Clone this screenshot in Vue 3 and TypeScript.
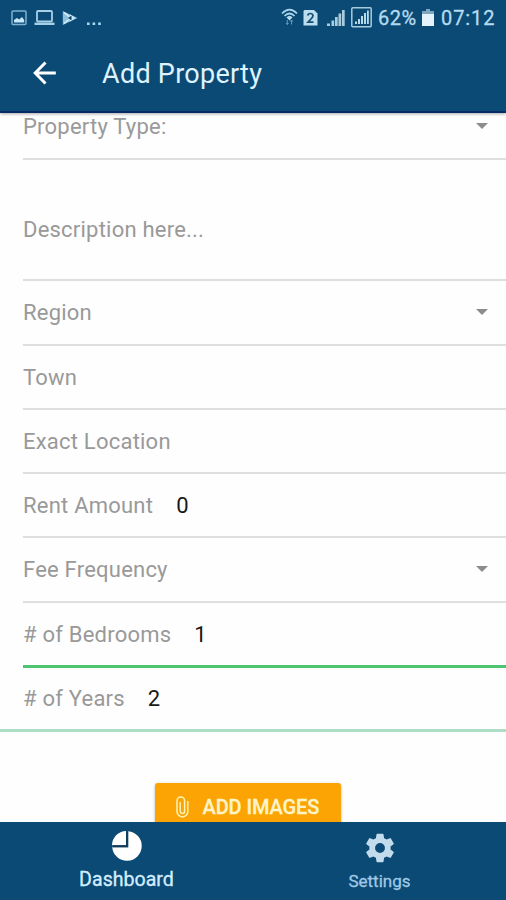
<script setup lang="ts">
interface Field {
  label: string
  value?: string
  kind?: 'select' | 'area'
  state?: 'active' | 'last'
  top?: boolean
  tall?: boolean
}

const fields: Field[] = [
  { label: 'Property Type:', kind: 'select', top: true },
  { label: 'Description here...', kind: 'area' },
  { label: 'Region', kind: 'select', tall: true },
  { label: 'Town' },
  { label: 'Exact Location' },
  { label: 'Rent Amount', value: '0' },
  { label: 'Fee Frequency', kind: 'select', tall: true },
  { label: '# of Bedrooms', value: '1', state: 'active', tall: true },
  { label: '# of Years', value: '2', state: 'last' },
]
</script>

<template>
  <div class="screen">
    <header class="top">
      <div class="status">
        <div class="notices">
          <svg width="16" height="16" viewBox="0 0 16 16">
            <rect x="1" y="1" width="14" height="13.5" rx="1" fill="none" stroke="#7fb2d0" stroke-width="1.5" />
            <path d="M3 12.5V10l3-2 2.2 1.5L11 7l2.2 3v2.5z" fill="#c8e8f8" />
          </svg>
          <svg class="laptop" width="21" height="16" viewBox="0 0 21 16">
            <rect x="3" y="1" width="15" height="10.5" rx="1" fill="none" stroke="#a5d0e8" stroke-width="1.8" />
            <path d="M0.5 12.600h20v2.400h-20z" fill="#a5d0e8" />
          </svg>
          <svg class="play" width="16" height="16" viewBox="0 0 16 16">
            <path d="M0.800 1v14L15.500 8z" fill="#8fc0dc" />
            <path d="M2 2.500l7 5.500-7 5.500M8 5l4 3-4 3" fill="none" stroke="#e0f4ff" stroke-width="1.2" />
            <path d="M6 8l3.500-2.400v4.800z" fill="#0b4a75" />
          </svg>
          <svg class="dots" width="16" height="16" viewBox="0 0 16 16">
            <path d="M0 12.500h2.600v2.600H0zM5.600 12.500h2.600v2.600H5.600zM11.200 12.500h2.600v2.600h-2.600z" fill="#a9d9f2" />
          </svg>
        </div>
        <div class="signals">
          <svg class="wifi" width="17" height="18" viewBox="0 0 17 18">
            <path d="M1 5.500Q8.500-2 16 5.500M3.500 8Q8.500 3 13.500 8M6 10Q8.500 7.500 11 10" fill="none" stroke="#acd6ec" stroke-width="1.7" />
            <path d="M6 9.500h5L8.500 12.500z" fill="#c5e5f5" />
            <path d="M6.300 12v4.500M10.500 12v4.500M5 15l1.300 1.500L7.600 15M9.200 13.500l1.300-1.500 1.300 1.500" fill="none" stroke="#6d9cbb" stroke-width="1" />
          </svg>
          <svg class="sim" width="15" height="18" viewBox="0 0 15 18">
            <path d="M1.500 1H11l3.500 3.500V16.500h-14V2z" fill="#bcdff0" />
            <path d="M4.700 6.500Q5 4.500 7.300 4.500T10 6.500Q10 8 8 10L5 13.200H10.500" fill="none" stroke="#174e73" stroke-width="1.700" />
          </svg>
          <svg class="bars" width="18" height="18" viewBox="0 0 18 18">
            <path d="M0 14.500h3V17H0zM4.500 11.500h2.700V17H4.500zM8 8h2.700v9H8zM11.500 4.500h2.700V17h-2.700zM15 1h2.700v16H15z" fill="#a8cbdd" />
          </svg>
          <svg class="boxed" width="21" height="21" viewBox="0 0 21 21">
            <rect x="0.800" y="0.800" width="19.400" height="19" rx="1" fill="none" stroke="#a8cbdd" stroke-width="1.500" />
            <path d="M4 14.500h2V17H4zM7 12h2v5H7zM10 9h2v8h-2zM13 6h2v11h-2zM16 3.500h1.800V17H16z" fill="#b9dbe9" />
          </svg>
          <span class="percent">62%</span>
          <svg class="battery" width="12" height="17" viewBox="0 0 12 17">
            <path d="M4 0h4v2h4v4H0V2h4z" fill="#7ea6be" />
            <path d="M0 5h12v12H0z" fill="#e5f4fb" />
          </svg>
          <span class="clock">07:12</span>
        </div>
      </div>
      <div class="bar">
        <svg class="back" width="24" height="24" viewBox="0 0 24 24">
          <path d="M12.500 1.500L2.200 12l10.300 10.500M2.500 12H22.800" fill="none" stroke="#fff" stroke-width="3" />
        </svg>
        <h1 class="title">Add Property</h1>
      </div>
    </header>

    <main class="form">
      <div
        v-for="field in fields"
        :key="field.label"
        class="field"
        :class="[field.kind, field.state, { top: field.top, tall: field.tall }]"
      >
        <div class="inner">
          <span class="label">{{ field.label }}</span>
          <span v-if="field.value" class="value">{{ field.value }}</span>
          <svg v-if="field.kind === 'select'" class="caret" width="12" height="6" viewBox="0 0 12 6">
            <path d="M0 0h12L6 6z" fill="#8c8c8c" />
          </svg>
        </div>
      </div>
      <div class="action">
        <button class="add" type="button">
          <svg width="13" height="22" viewBox="0 0 13 22">
            <path d="M11.800 5v10.500a5.400 5.400 0 0 1-10.800 0V4.700a3.800 3.800 0 0 1 7.600 0v10.600a2.200 2.200 0 0 1-4.400 0V6" fill="none" stroke="#fff3b8" stroke-width="1.500" />
          </svg>
          <span>ADD IMAGES</span>
        </button>
      </div>
    </main>

    <nav class="tabs">
      <a class="tab selected">
        <svg width="32" height="32" viewBox="0 0 32 32">
          <path d="M17.200 1.200A14.800 14.800 0 1 1 1.200 17.200H17.200z" fill="#fff" />
          <path d="M15 1v14.200H1A14.500 14.500 0 0 1 15 1z" fill="#fff" />
          <path d="M16.200 2v14.200H2" fill="none" stroke="#153c59" stroke-width="1.900" />
        </svg>
        <span>Dashboard</span>
      </a>
      <a class="tab">
        <svg width="34" height="34" viewBox="0 0 24 24">
          <path d="M19.430 12.980c.040-.320.070-.640.070-.980s-.030-.660-.070-.980l2.110-1.650c.190-.150.240-.420.120-.640l-2-3.460c-.120-.220-.390-.300-.610-.220l-2.490 1c-.520-.400-1.080-.730-1.690-.980l-.380-2.650A.488.488 0 0 0 14 2h-4c-.250 0-.460.180-.490.420l-.380 2.650c-.610.250-1.170.590-1.690.980l-2.490-1c-.230-.090-.490 0-.610.220l-2 3.460c-.130.220-.070.490.120.640l2.110 1.650c-.040.320-.070.650-.070.980s.030.660.070.980l-2.110 1.650c-.190.150-.240.420-.120.640l2 3.460c.120.220.390.300.610.220l2.490-1c.520.400 1.080.730 1.690.980l.380 2.650c.030.240.240.420.490.420h4c.250 0 .460-.180.490-.420l.380-2.650c.610-.250 1.170-.590 1.690-.980l2.490 1c.230.090.490 0 .610-.220l2-3.460c.120-.220.070-.490-.120-.640zM12 15.500a3.500 3.500 0 1 1 0-7 3.500 3.500 0 0 1 0 7z" fill="#c3dced" />
        </svg>
        <span>Settings</span>
      </a>
    </nav>
  </div>
</template>

<style>
body {
  margin: 0;
  background: #fefefe;
}
</style>

<style scoped>
.screen {
  display: flex;
  flex-direction: column;
  width: 506px;
  height: 900px;
  overflow: hidden;
  background: #fefefe;
  font-family: Roboto, "Liberation Sans", sans-serif;
}
.screen > .top {
  flex: none;
  box-sizing: border-box;
  height: 113px;
  background: #0b4a75;
  border-bottom: 2px solid #052a66;
  box-shadow: 0 1px 3px rgba(0, 0, 0, 0.35);
  z-index: 1;
}
.status {
  display: flex;
  justify-content: space-between;
  height: 36px;
  padding: 0 11px;
  color: #b4dbef;
}
.notices,
.signals {
  display: flex;
  align-items: center;
  height: 36px;
}
.laptop {
  margin-left: 7px;
}
.play {
  margin-left: 7px;
}
.dots {
  margin-left: 9px;
}
.signals {
  font-size: 20px;
  line-height: 36px;
  -webkit-text-stroke: 0.3px #b4dbef;
}
.wifi {
  margin-bottom: 3px;
}
.sim {
  margin-left: 5px;
}
.bars {
  margin-left: 9px;
}
.boxed {
  margin: 0 6px 2px;
}
.percent {
  width: 39px;
  letter-spacing: 0.500px;
}
.battery {
  margin: 0 7px 1px 5px;
}
.clock {
  width: 54px;
  letter-spacing: 0.900px;
}
.bar {
  display: flex;
  align-items: center;
  height: 75px;
  padding-left: 33px;
}
.back {
  margin-bottom: 2px;
}
.title {
  margin: 0 0 0 45px;
  color: #dff3ff;
  font-size: 27px;
  font-weight: 400;
  letter-spacing: 0.270px;
  line-height: 36px;
}
.form {
  flex: 1;
  min-height: 0;
  overflow: hidden;
}
.field {
  padding-left: 23px;
}
.inner {
  display: flex;
  align-items: center;
  box-sizing: border-box;
  height: 64px;
  border-bottom: 2px solid #dfdfdf;
  font-size: 22px;
  letter-spacing: 0.220px;
}
.tall .inner {
  height: 65px;
}
.top .inner {
  height: 47px;
  padding-bottom: 19px;
}
.area .inner {
  height: 121px;
  padding-top: 19px;
}
.active .inner {
  border-bottom: 3px solid #4cc471;
}
.field.last {
  padding-left: 0;
}
.last .inner {
  padding-left: 23px;
  border-bottom: 3px solid #afdcc5;
}
.label {
  color: #999;
}
.value {
  margin-left: 23px;
  color: #181818;
}
.caret {
  margin: 0 18px 1px auto;
}
.action {
  display: flex;
  justify-content: center;
  padding: 51px 11px 0 0;
}
.add {
  display: flex;
  align-items: center;
  gap: 14px;
  width: 186px;
  height: 47px;
  padding: 0 0 0 21px;
  border: 0;
  border-radius: 3px;
  background: #fba403;
  box-shadow: 0 1px 3px rgba(0, 0, 0, 0.3);
  color: #fff4c9;
  font-family: inherit;
  font-size: 20px;
  font-weight: 500;
  letter-spacing: -0.100px;
  white-space: nowrap;
  -webkit-text-stroke: 0.3px #fff4c9;
}
.tabs {
  display: grid;
  grid-template-columns: 1fr 1fr;
  flex: none;
  height: 78px;
  background: #0b4a75;
  z-index: 1;
}
.tab {
  display: flex;
  flex-direction: column;
  align-items: center;
  padding-top: 9px;
  color: #9fc9e5;
  font-size: 17px;
  line-height: 22px;
  -webkit-text-stroke: 0.3px currentColor;
}
.tab span {
  margin-top: 5px;
}
.selected {
  padding-top: 8px;
  color: #d3eeff;
  font-size: 19.600px;
}
.selected span {
  margin-top: 7px;
}
</style>
